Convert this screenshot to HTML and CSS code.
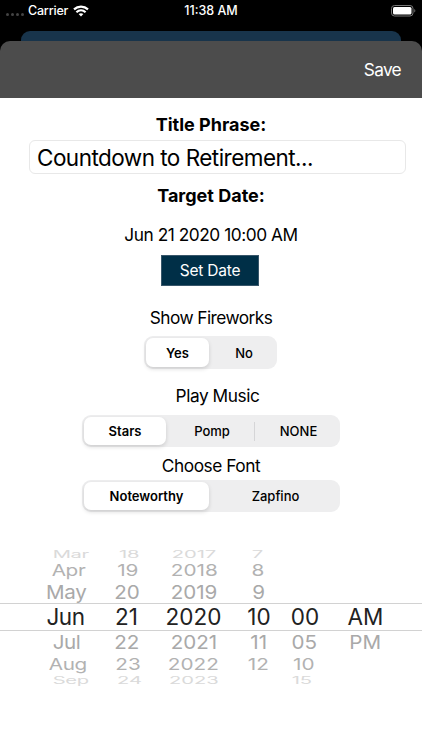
FILE: index.html
```
<!DOCTYPE html>
<html lang="en">
<head>
<meta charset="UTF-8">
<meta name="viewport" content="width=device-width, initial-scale=1.0">
<title>Countdown Settings</title>
<link rel="stylesheet" href="styles.css">
</head>
<body>

<div class="top">
    <div class="status-bar">
        <div class="carrier">
            <span class="dots"><i></i><i></i><i></i><i></i></span>
            <span class="carrier-name">Carrier</span>
            <svg class="wifi" width="16" height="12" viewBox="0 0 16 12" fill="none" stroke="#fff" stroke-width="2.2">
                <path d="M1 4.4C5 .6 11 .6 15 4.4"/>
                <path d="M3.4 7.2C6.1 4.8 9.9 4.8 12.6 7.2"/>
                <path d="M8 11.5L5.6 9.1C7 7.8 9 7.8 10.4 9.1Z" fill="#fff" stroke="none"/>
            </svg>
        </div>
        <span class="time">11:38 AM</span>
        <svg class="battery" width="26" height="12" viewBox="0 0 26 12">
            <rect x=".5" y=".5" width="21.5" height="10.5" rx="3" fill="none" stroke="#777"/>
            <rect x="2" y="2" width="18.5" height="7.5" rx="1.5" fill="#fff"/>
            <path d="M23.3 4V7.6C24.7 7 24.7 4.6 23.3 4Z" fill="#777"/>
        </svg>
    </div>
    <div class="back-card"></div>
    <div class="nav-bar"><span class="save">Save</span></div>
</div>

<div class="settings">
    <h2 class="title-label">Title Phrase:</h2>
    <div class="phrase"><span>Countdown to Retirement...</span></div>
    <h2 class="date-label">Target Date:</h2>
    <p class="date-value">Jun 21 2020 10:00 AM</p>
    <button class="set-date">Set Date</button>

    <p class="fireworks-label">Show Fireworks</p>
    <div class="segments fireworks">
        <span class="on">Yes</span>
        <span>No</span>
    </div>

    <p class="music-label">Play Music</p>
    <div class="segments music">
        <span class="on">Stars</span>
        <span>Pomp</span>
        <span class="divided">NONE</span>
    </div>

    <p class="font-label">Choose Font</p>
    <div class="segments font">
        <span class="on">Noteworthy</span>
        <span>Zapfino</span>
    </div>
</div>

<div class="picker">
    <div class="row far"><span>Mar</span><span>18</span><span>2017</span><span>7</span><span></span><span></span></div>
    <div class="row mid"><span>Apr</span><span>19</span><span>2018</span><span>8</span><span></span><span></span></div>
    <div class="row near"><span>May</span><span>20</span><span>2019</span><span>9</span><span></span><span></span></div>
    <div class="row current"><span>Jun</span><span>21</span><span>2020</span><span>10</span><span>00</span><span>AM</span></div>
    <div class="row near"><span>Jul</span><span>22</span><span>2021</span><span>11</span><span>05</span><span>PM</span></div>
    <div class="row mid"><span>Aug</span><span>23</span><span>2022</span><span>12</span><span>10</span><span></span></div>
    <div class="row far"><span>Sep</span><span>24</span><span>2023</span><span></span><span>15</span><span></span></div>
</div>

</body>
</html>
```

FILE: styles.css
```
* {
    box-sizing: border-box;
}
body {
    font-family: Inter, "Liberation Sans", sans-serif;
    background-color: #fff;
    color: #000;
    margin: 0;
    height: 750px;
    overflow: hidden;
}
h2, p {
    margin: 0;
    line-height: 22px;
    white-space: nowrap;
}
h2 {
    font-size: 18px;
}
p {
    font-size: 17.3px;
    letter-spacing: -0.45px;
}
.top {
    background-color: #000;
    height: 98px;
}
.status-bar {
    display: grid;
    grid-template-columns: 1fr auto 1fr;
    align-items: center;
    height: 31px;
    padding: 0 6px 10px 6px;
    color: #fff;
    font-size: 12.5px;
    font-weight: 500;
}
.carrier {
    display: flex;
    align-items: center;
}
.carrier-name {
    letter-spacing: -0.2px;
}
.dots {
    display: flex;
    gap: 2px;
    margin: 7px 4px 0 0;
}
.dots i {
    width: 3px;
    height: 3px;
    border-radius: 50%;
    background-color: #444;
}
.wifi {
    margin-left: 5px;
}
.battery {
    justify-self: end;
    margin-right: -1px;
}
.back-card {
    height: 10px;
    margin: 0 21px;
    border-radius: 9px 9px 0 0;
    background-color: #18344b;
}
.nav-bar {
    display: flex;
    align-items: center;
    justify-content: flex-end;
    height: 57px;
    padding-right: 21px;
    border-radius: 10px 10px 0 0;
    background-color: #4c4c4c;
    color: #fff;
    font-size: 17.3px;
    letter-spacing: -0.7px;
}
.settings {
    display: flex;
    flex-direction: column;
    align-items: center;
    height: 450px;
    padding-top: 16px;
}
.phrase {
    align-self: stretch;
    height: 34px;
    margin: 4px 16px 0 29px;
    padding-left: 7px;
    border: 1px solid #e8e8e8;
    border-radius: 6px;
    font-size: 22.5px;
    letter-spacing: -0.53px;
    line-height: 33px;
    white-space: nowrap;
}
.date-label {
    margin-top: 11px;
}
.date-value {
    margin-top: 17px;
}
.set-date {
    width: 98px;
    height: 31px;
    margin: 9px 2px 0 0;
    padding: 0;
    border: 1px solid #38566a;
    background-color: #002f47;
    color: #fff;
    font-family: inherit;
    font-size: 15.5px;
    letter-spacing: -0.2px;
}
.fireworks-label {
    margin-top: 21px;
    letter-spacing: -0.55px;
}
.segments {
    display: grid;
    grid-auto-flow: column;
    height: 32px;
    padding: 2px;
    border-radius: 9px;
    background-color: #eeeeef;
    font-size: 13px;
    font-weight: 500;
}
.segments span {
    display: flex;
    align-items: center;
    justify-content: center;
    padding-left: 4px;
}
.segments .on {
    padding: 0;
    border-radius: 7px;
    background-color: #fff;
    box-shadow: 0 2px 4px rgba(0, 0, 0, 0.14);
    font-weight: 600;
}
.segments .divided {
    height: 19px;
    align-self: center;
    border-left: 1px solid #d5d5d7;
}
.segments.fireworks {
    width: 133px;
    height: 33px;
    margin: 7px 1px 0 0;
    grid-template-columns: 63px 1fr;
}
.music {
    width: 258px;
    margin-top: 8px;
    grid-template-columns: 82px 1fr 84px;
}
.font {
    width: 258px;
    margin-top: 3px;
    grid-template-columns: 125px 1fr;
}
.music-label {
    margin: 16px 0 0 13px;
}
.font-label {
    margin-top: 8px;
}
.row {
    display: grid;
    grid-template-columns: 91px 31px 103px 28px 64px 57px;
    grid-template-rows: 100%;
    align-items: center;
    justify-items: center;
    padding-left: 20px;
    color: #a9a9a9;
    font-size: 22px;
    line-height: 1;
}
.row span:first-child {
    letter-spacing: -0.4px;
}
.current {
    height: 28px;
    border-top: 1px solid #d2d2d2;
    border-bottom: 1px solid #d2d2d2;
    color: #222;
    font-size: 22.5px;
}
/* rows get smaller and move inwards away from the middle */
.near {
    height: 21.6px;
    transform: scaleX(0.995);
}
.near span {
    transform: scale(0.94, 0.87);
}
.mid {
    height: 22.4px;
    color: #b2b2b2;
    transform: scaleX(0.982);
}
.mid span {
    transform: scale(0.96, 0.74);
}
.far {
    height: 11px;
    color: #dadada;
    transform: scaleX(0.965);
}
.far span {
    transform: scale(0.95, 0.46);
}
```
